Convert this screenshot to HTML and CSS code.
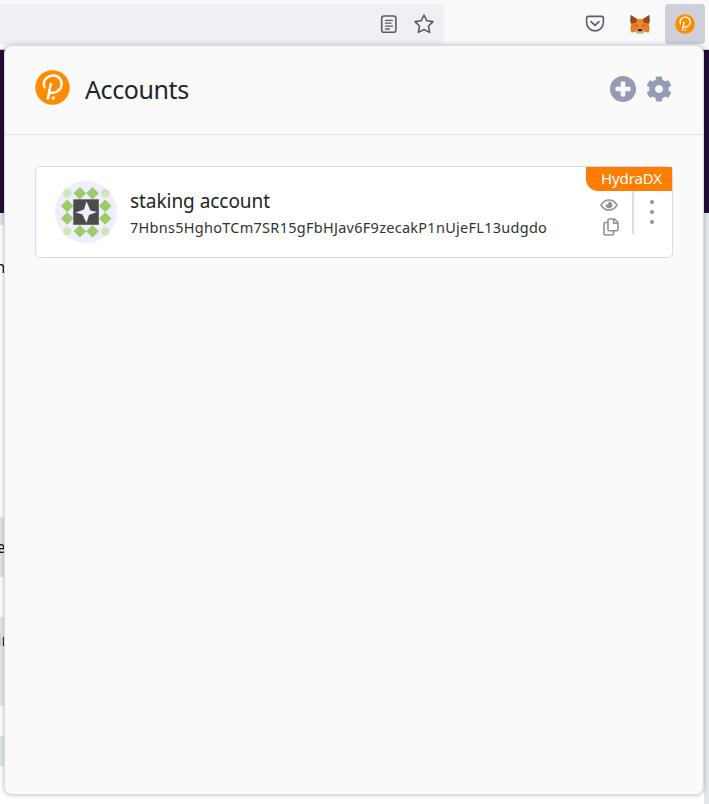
FILE: index.html
```html
<!DOCTYPE html>
<html lang="en">
<head>
<meta charset="utf-8">
<title>Accounts</title>
<link rel="stylesheet" href="styles.css">
</head>
<body>
<svg class="defs" aria-hidden="true">
  <symbol id="polkadot" viewBox="0 0 36 36">
    <circle cx="18" cy="18" r="17.7" fill="#ff8c00"/>
    <path d="M9.700 17.800C8.300 13.500 9.200 10.500 11.900 8.200C16 4.500 22.500 4.800 25.700 9C29 13.400 27.400 19.700 22.800 22.100C20.900 23.100 18.700 23.600 16.300 23.600M16.300 14.500L13.200 29.300" fill="none" stroke="#fff" stroke-width="2.500" stroke-linecap="round" stroke-linejoin="round"/>
    <circle cx="18.800" cy="28.800" r="1.700" fill="#fff"/>
  </symbol>
</svg>
<nav class="toolbar">
  <div class="urlbar">
    <svg class="tool" viewBox="0 0 20 20"><rect x="2.700" y="2" width="14.200" height="16.300" rx="2.300"/><path d="M6.500 6.300h7M6.500 9.200h5.500M6.500 12.100h7M6.500 15h3.800" stroke-width="1.300"/></svg>
    <svg class="tool" viewBox="0 0 20 20"><path d="M10 1.100l2.800 5.600 6.200.9-4.500 4.400 1.100 6.400L10 15.500l-5.600 2.900L5.500 12 1 7.600l6.200-.9z"/></svg>
  </div>
  <div class="extensions">
    <svg class="tool" viewBox="0 0 20 20"><path d="M3.500 2.400h13q1.900 0 1.900 1.900v4.200a8.400 8.400 0 0 1-16.800 0V4.300q0-1.900 1.900-1.900zM6 7.600l4 3.800 4-3.800"/></svg>
    <svg class="fox" viewBox="0 0 20 20">
      <path d="M.7 1l6.800 4h5l6.800-4 .4 6.800-1 3 1.100 3.800-1.300 4.100-3.700-1.100-2.400 1.900H7.600l-2.400-1.900-3.700 1.100L.2 14.600l1.100-3.800-1-3z" fill="#e87d25"/>
      <path d="M.7 1l6.600 4.500-1.400 3.300-4.600.6-1-2.200zM19.300 1l-6.600 4.500 1.400 3.300 4.600.6 1-2.200z" fill="#8d4b25"/>
      <path d="M7.400 5h5.200l1.100 5-1.400 5H7.700l-1.400-5z" fill="#f6851b"/>
      <path d="M5.400 11.200l2 .1.300 1.100zM14.600 11.200l-2 .1-.3 1.100z" fill="#233447"/>
      <path d="M6.300 16.600l1.700-1.200h4l1.700 1.200-1.300 2.200H7.600z" fill="#cebfb2"/>
      <path d="M8.300 15.200h3.400l.4 2h-4.200z" fill="#161616"/>
    </svg>
    <div class="active-extension"><svg><use href="#polkadot"/></svg></div>
  </div>
</nav>
<main class="page">
  <div class="banner"></div>
  <div class="content">
    <div class="strip"></div>
    <div class="copy copy-one">n</div>
    <div class="copy copy-two">e</div>
    <div class="copy copy-three">in</div>
    <div class="copy-four"></div>
  </div>
</main>
<section class="popup">
  <header class="header">
    <svg class="logo"><use href="#polkadot"/></svg>
    <h1>Accounts</h1>
    <svg class="action" viewBox="0 0 26 26"><path fill-rule="evenodd" d="M13 0a13 13 0 1 0 0 26 13 13 0 0 0 0-26zM11.700 5.600h2.600q1 0 1 1v4.100h4.200q1 0 1 1v2.600q0 1-1 1h-4.200v4.200q0 1-1 1h-2.600q-1 0-1-1v-4.200H6.500q-1 0-1-1v-2.600q0-1 1-1h4.200V6.600q0-1 1-1z"/></svg>
    <svg class="action" viewBox="11 0 490 512"><path d="M487.400 315.700l-42.600-24.600c4.300-23.200 4.300-47 0-70.200l42.600-24.600c4.900-2.800 7.100-8.600 5.500-14-11.100-35.600-30-67.800-54.700-94.600-3.800-4.100-10-5.100-14.800-2.300L380.800 110c-17.900-15.400-38.500-27.300-60.800-35.100V25.800c0-5.600-3.900-10.500-9.400-11.700-36.700-8.200-74.300-7.800-109.200 0-5.500 1.200-9.400 6.100-9.400 11.700V75c-22.200 7.900-42.800 19.800-60.800 35.100L88.700 85.500c-4.900-2.800-11-1.900-14.800 2.300-24.700 26.700-43.600 58.900-54.700 94.600-1.700 5.400.6 11.200 5.500 14L67.300 221c-4.300 23.200-4.300 47 0 70.200l-42.600 24.600c-4.900 2.800-7.100 8.600-5.500 14 11.100 35.600 30 67.800 54.700 94.600 3.800 4.100 10 5.100 14.800 2.300l42.600-24.600c17.900 15.400 38.500 27.300 60.800 35.100v49.200c0 5.600 3.900 10.500 9.400 11.700 36.700 8.200 74.300 7.800 109.200 0 5.500-1.200 9.400-6.100 9.400-11.700v-49.200c22.200-7.900 42.800-19.800 60.800-35.100l42.600 24.600c4.900 2.800 11 1.900 14.800-2.300 24.700-26.700 43.600-58.900 54.700-94.600 1.500-5.500-.7-11.300-5.600-14.100zM256 336c-44.100 0-80-35.900-80-80s35.900-80 80-80 80 35.900 80 80-35.900 80-80 80z"/></svg>
  </header>
  <article class="card">
    <svg class="avatar" viewBox="0 0 62 62">
      <circle cx="31" cy="31" r="31" fill="#eeeeff"/>
      <g fill="#cfe7b8"><circle cx="12.200" cy="12.200" r="4.200"/><circle cx="50.200" cy="12.200" r="4.200"/><circle cx="12.200" cy="50.200" r="4.200"/><circle cx="50.200" cy="50.200" r="4.200"/></g>
      <path fill="#9ccc68" d="M24.900 5.900l6.300 6.300 6.300-6.300 6.300 6.300-6.300 6.300-6.300-6.300-6.300 6.300-6.300-6.300zM24.900 43.900l6.300 6.300 6.300-6.300 6.300 6.300-6.300 6.300-6.300-6.300-6.300 6.300-6.300-6.300zM5.900 24.900l6.300-6.300 6.300 6.300-6.300 6.300 6.300 6.300-6.300 6.300-6.300-6.300 6.300-6.300zM43.900 24.900l6.300-6.300 6.300 6.300-6.300 6.300 6.300 6.300-6.300 6.300-6.300-6.300 6.300-6.300z"/>
      <path fill="#4b4b4b" d="M18.300 18.300h25.500v25.500H18.300z"/>
      <path fill="#eeeeff" d="M31.500 20.500L35.500 29.500 42 31 34 34 31.500 42 27.500 33.500 20.500 31.500 29 28.500z"/>
    </svg>
    <div class="details"><h2>staking account</h2><p>7Hbns5HghoTCm7SR15gFbHJav6F9zecakP1nUjeFL13udgdo</p></div>
    <div class="controls">
      <svg class="eye" viewBox="0 0 18 12"><path d="M1 6Q4 .9 9 .9T17 6Q14 11.100 9 11.100T1 6z" fill="none" stroke="#929292" stroke-width="1.500"/><path d="M9 2.600a3.400 3.400 0 1 1-3.300 2.700q2.200 1 2.700-1.300Q8.500 3.200 9 2.600z" fill="#929292"/></svg>
      <svg class="files" viewBox="0 0 16 18"><path d="M6 1h5.500L15 4.500v7q0 1.300-1.300 1.300H6.300Q5 12.800 5 11.500V2.200Q5 1 6 1zM10.700 1v4.200H15M5 4.500H2.200Q1 4.500 1 5.700v9.800Q1 17 2.400 17h6.800q1.300 0 1.300-1.300v-2.900"/></svg>
    </div>
    <div class="menu"><i></i><i></i><i></i></div>
    <span class="badge">HydraDX</span>
  </article>
</section>
</body>
</html>
```
FILE: styles.css
```css
* { box-sizing: border-box; }
body {
  margin: 0;
  position: relative;
  height: 804px;
  overflow: hidden;
  background: #fff;
  color: #24242a;
  font-family: "Noto Sans", "Open Sans", sans-serif;
}
.defs { position: absolute; width: 0; height: 0; }
svg { display: block; flex: none; }
h1, h2, p { margin: 0; font-weight: 400; white-space: nowrap; }
.toolbar {
  height: 50px;
  padding: 4px 4px 0 0;
  display: flex;
  justify-content: space-between;
  background: #f9f9fb;
  border-bottom: 1px solid #ccccd2;
}
.urlbar {
  width: 444px;
  height: 40px;
  padding-right: 10px;
  display: flex;
  justify-content: flex-end;
  align-items: center;
  gap: 15px;
  background: #f0f0f4;
  border-radius: 0 4px 4px 0;
}
.tool { width: 20px; height: 20px; fill: none; stroke: #5b5b66; stroke-width: 1.6; stroke-linecap: round; stroke-linejoin: round; }
.extensions { display: flex; align-items: center; height: 40px; }
.fox { width: 20px; height: 20px; margin: 0 15px 0 25px; }
.active-extension { width: 40px; height: 40px; border-radius: 4px; background: #cfcfd8; display: grid; place-items: center; }
.active-extension svg { width: 20px; height: 20px; }
.page { font-size: 17px; color: #111; }
.banner { height: 163px; background: #200f36; }
.content { height: 591px; border-right: 5px solid #e4e8ec; }
.strip { height: 12px; background: #e0e4e6; }
.copy { text-indent: -4px; }
.copy-one { height: 292px; padding-top: 30px; text-indent: -5px; }
.copy-two { height: 60px; line-height: 60px; background: #e3e3e3; }
.copy-three { height: 89px; margin-top: 40px; line-height: 46px; background: #e7e7ea; text-indent: -3px; }
.copy-four { height: 30px; margin-top: 30px; background: #e2e6ec; }
.popup {
  position: absolute;
  left: 4px;
  top: 45px;
  width: 700px;
  height: 750px;
  background: #fafafa;
  border: 1px solid #d8dce6;
  border-radius: 8px;
  box-shadow: 0 0 5px rgba(0, 0, 0, .26);
}
.header {
  height: 89px;
  padding: 0 31px 2px 30px;
  display: flex;
  align-items: center;
  gap: 10px;
  border-bottom: 1px solid #d8dfeb;
}
.logo { width: 35px; height: 35px; margin-top: -4px; }
h1 { flex: 1; margin-left: 5px; font-size: 25px; line-height: 36px; letter-spacing: -.4px; }
.action { width: 26px; height: 26px; fill: #939cb5; }
.card {
  position: relative;
  width: 638px;
  height: 92px;
  margin: 31px 0 0 30px;
  padding-left: 19px;
  display: flex;
  align-items: center;
  background: #fff;
  border: 1px solid #d8dce8;
  border-radius: 5px;
}
.avatar { width: 62px; height: 62px; }
.details { margin-left: 13px; margin-top: 2px; width: 471px; }
h2 { font-size: 19px; line-height: 26px; letter-spacing: -.05px; }
p { margin-top: 1px; font-size: 14.500px; line-height: 24px; letter-spacing: .27px; color: #333; }
.controls { width: 33px; height: 43px; align-self: flex-start; margin-top: 24px; padding-top: 8px; border-right: 2px solid #d8dfeb; }
.eye { width: 18px; height: 12px; margin-left: -1px; }
.files { width: 16px; height: 18px; margin: 7px 0 0 2px; fill: none; stroke: #929292; stroke-width: 1.600; }
.menu { height: 24px; margin-left: 16px; display: flex; flex-direction: column; justify-content: space-between; }
.menu i { width: 4px; height: 4px; border-radius: 50%; background: #929292; }
.badge {
  position: absolute;
  top: 0;
  right: 0;
  width: 86px;
  height: 24px;
  padding-left: 15px;
  border-bottom-left-radius: 12px;
  background: #ff7d01;
  color: #fff;
  font-size: 15px;
  line-height: 23px;
  letter-spacing: -.1px;
}
```
